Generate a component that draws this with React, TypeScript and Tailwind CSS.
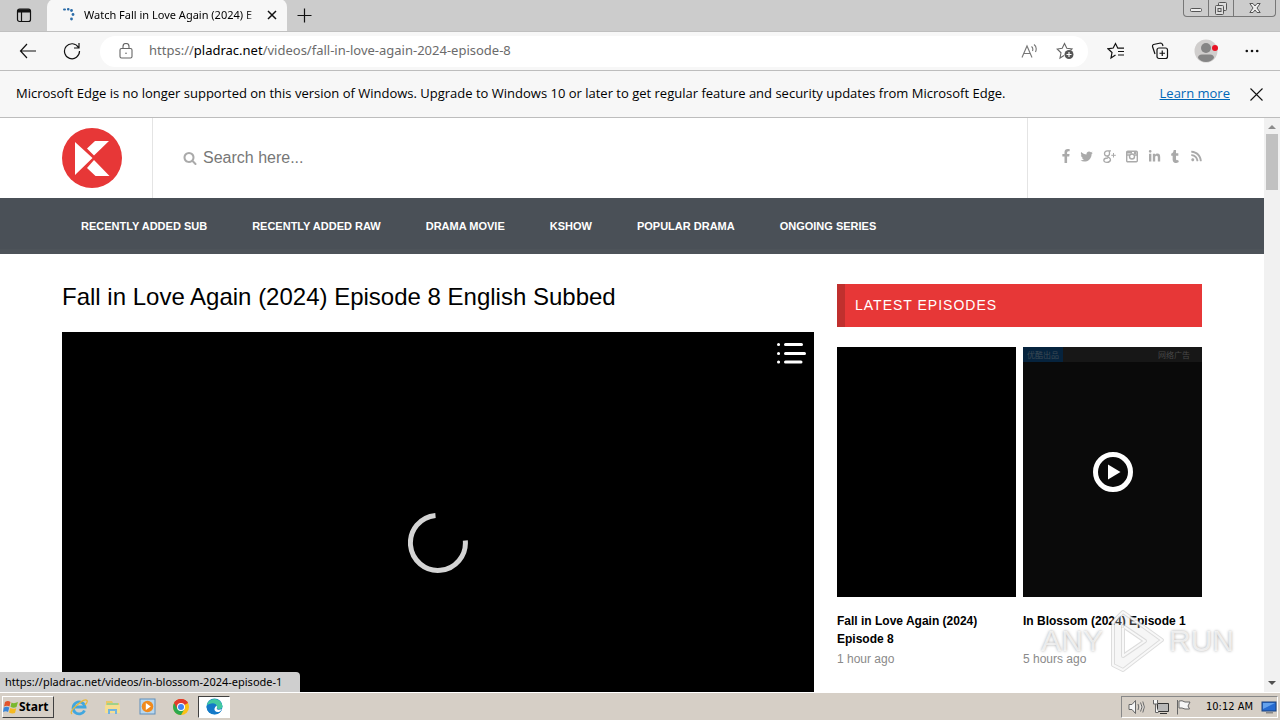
import type { ReactNode } from 'react';
import { FaLinkedinIn, FaRss, FaTumblr } from 'react-icons/fa';

const navItems = ['RECENTLY ADDED SUB', 'RECENTLY ADDED RAW', 'DRAMA MOVIE', 'KSHOW', 'POPULAR DRAMA', 'ONGOING SERIES'];

function IconButton({ label, className = '', children }: { label: string; className?: string; children: ReactNode }) {
  return (
    <button type="button" aria-label={label} className={`flex items-center justify-center shrink-0 ${className}`}>
      {children}
    </button>
  );
}

function TitleBar() {
  return (
    <div className="flex h-8 items-end bg-[#cccccc] border-b border-[#c0c0c0]">
      <IconButton label="Tab actions" className="h-8 w-[47px] rounded-br-lg">
        <svg width="16" height="16" viewBox="0 0 16 16" fill="none" stroke="#111">
          <rect x="1.5" y="2" width="13" height="12.5" rx="2" strokeWidth="1.2" />
          <path d="M2 3.2h12M2 4.6h12" strokeWidth="2" />
          <path d="M5.5 5v9.500" strokeWidth="1.2" />
        </svg>
      </IconButton>
      <div className="flex h-8 w-[240px] items-center rounded-t-lg bg-[#f7f7f7] pl-4">
        <svg width="14" height="14" viewBox="0 0 14 14" className="mr-[7px] shrink-0" fill="#2b6ca8">
          <rect x="0" y="0.500" width="3" height="2" rx="1" />
          <rect x="4" y="0" width="2.500" height="2.500" rx="1" />
          <circle cx="8.500" cy="2.500" r="1.400" />
          <circle cx="10" cy="6.500" r="1.400" />
          <circle cx="8.500" cy="11" r="1.400" />
        </svg>
        <span className="flex-1 overflow-hidden whitespace-nowrap bg-linear-to-r from-black from-92% to-[#ccc] bg-clip-text font-['Noto_Sans',sans-serif] text-[11px] text-transparent">
          Watch Fall in Love Again (2024) E
        </span>
        <IconButton label="Close tab" className="h-8 w-[30px]">
          <svg width="10" height="10" viewBox="0 0 10 10" stroke="#111" strokeWidth="1.500">
            <path d="M1 1l8 8M9 1l-8 8" />
          </svg>
        </IconButton>
      </div>
      <IconButton label="New tab" className="h-8 w-[34px]">
        <svg width="15" height="15" viewBox="0 0 15 15" stroke="#111" strokeWidth="1.200">
          <path d="M7.500 0.500v14M0.500 7.500h14" />
        </svg>
      </IconButton>
      <div className="mr-[4px] ml-auto flex h-[17px] self-start rounded-b border border-t-0 border-[#777]">
        <IconButton label="Minimize" className="w-[25px] border-r border-[#777]">
          <svg width="14" height="12" viewBox="0 0 14 12" fill="#eee" stroke="#555">
            <rect x="1.500" y="6.500" width="11" height="3" rx="1" />
          </svg>
        </IconButton>
        <IconButton label="Restore" className="w-[25px] border-r border-[#777]">
          <svg width="14" height="13" viewBox="0 0 14 13" fill="#ddd" stroke="#555">
            <rect x="4.500" y="0.500" width="8" height="8" rx="1" />
            <rect x="1.500" y="3.500" width="8" height="9" rx="1" />
            <rect x="4" y="6.500" width="3" height="3" />
          </svg>
        </IconButton>
        <IconButton label="Close" className="w-[41px]">
          <svg width="12" height="10" viewBox="0 0 12 10" fill="#eee" stroke="#555">
            <path d="M0.800 0.500h3.200l2 2.500 2-2.500h3.200L8 5l3.200 4.500H8L6 7 4 9.500H0.800L4 5z" />
          </svg>
        </IconButton>
      </div>
    </div>
  );
}

function Toolbar() {
  return (
    <div className="flex h-[39px] items-center border-b border-[#bdbdbd] bg-[#f7f7f7]">
      <IconButton label="Back" className="ml-[12px] w-8">
        <svg width="18" height="16" viewBox="0 0 18 16" fill="none" stroke="#111" strokeWidth="1.200">
          <path d="M17 8H1.500M8 1L1.500 8 8 15" />
        </svg>
      </IconButton>
      <IconButton label="Refresh" className="ml-[12px] w-8">
        <svg width="18" height="18" viewBox="0 0 18 18" fill="none" stroke="#111" strokeWidth="1.200">
          <path d="M15.500 5.500A7.500 7.500 0 1 0 16.500 9M16 1v5h-5" />
        </svg>
      </IconButton>
      <div className="ml-3 flex h-[31px] flex-1 items-center rounded-full bg-white pr-[5px] pl-[19px]">
        <svg width="14" height="16" viewBox="0 0 14 16" fill="none" stroke="#666" strokeWidth="1.100">
          <rect x="1" y="5.500" width="12" height="9.500" rx="1.500" />
          <path d="M4 5.500V3.500a3 3 0 0 1 6 0v2" />
          <circle cx="7" cy="10.200" r="0.800" fill="#666" stroke="none" />
        </svg>
        <span className="ml-4 flex-1 font-['Noto_Sans',sans-serif] text-[13px] text-[#6b6b6b]">
          https://<span className="text-black">pladrac.net</span>/videos/fall-in-love-again-2024-episode-8
        </span>
        <IconButton label="Read aloud" className="w-[36px]">
          <svg width="17" height="16" viewBox="0 0 17 16" fill="none" stroke="#777" strokeWidth="1.100">
            <path d="M1 14.500L6 3l5 11.500M2.800 10.500h6.400M10.500 3.500q2 1.500 1 4.500M13 1.500q3.500 2.500 1.500 7.500" />
          </svg>
        </IconButton>
        <IconButton label="Add to favorites" className="w-[36px]">
          <svg width="18" height="18" viewBox="0 0 18 18" fill="none" stroke="#666" strokeWidth="1.100">
            <path d="M8 13.500L4 16l1-5.200L1.200 7l5-.8L8.500 1.500l2.300 4.700 5.200.8-1.500 1.500" />
            <circle cx="13" cy="12.500" r="4.500" fill="#555" stroke="none" />
            <path d="M13 10v5M10.500 12.500h5" stroke="#fff" />
          </svg>
        </IconButton>
      </div>
      <IconButton label="Favorites" className="ml-[6px] w-11">
        <svg width="18" height="18" viewBox="0 0 18 18" fill="none" stroke="#111" strokeWidth="1.200">
          <path d="M8.500 13L4 16l1-5.500L1 6.800l5.200-.8L8.500 1.500l2.300 4.700h6.200M11 9.500h6M11 13h6" />
        </svg>
      </IconButton>
      <IconButton label="Collections" className="w-11">
        <svg width="18" height="18" viewBox="0 0 18 18" fill="none" stroke="#111" strokeWidth="1.200">
          <rect x="6" y="6" width="10.500" height="10.500" rx="2" />
          <path d="M11.250 8.500v5.500M8.500 11.250H14M4 12L1.500 4.500q-.3-1.500 1-2L9.500 1q1.500 0 2 1.500l.5 1.500" />
        </svg>
      </IconButton>
      <IconButton label="Profile" className="w-[48px]">
        <svg width="24" height="24" viewBox="0 0 24 24">
          <circle cx="12" cy="12" r="11.500" fill="#d0cecd" />
          <circle cx="12" cy="9" r="5" fill="#858585" />
          <path d="M4 19q0-3.500 4-3.500h8q4 0 4 3.500-3 4-8 4t-8-4z" fill="#858585" />
          <circle cx="21" cy="9" r="3" fill="#e81123" />
        </svg>
      </IconButton>
      <IconButton label="Settings and more" className="mr-[6px] w-11">
        <svg width="14" height="4" viewBox="0 0 14 4" fill="#111">
          <circle cx="1.800" cy="2" r="1.300" />
          <circle cx="7" cy="2" r="1.300" />
          <circle cx="12.200" cy="2" r="1.300" />
        </svg>
      </IconButton>
    </div>
  );
}

function InfoBar() {
  return (
    <div className="flex h-[47px] items-center border-b border-[#bdbdbd] bg-[#f7f7f7] pl-4 text-[13px]">
      <p className="flex-1 whitespace-nowrap text-black">
        Microsoft Edge is no longer supported on this version of Windows. Upgrade to Windows 10 or later to get regular feature and security updates from Microsoft Edge.
      </p>
      <a href="#learn" className="text-[#0067b8] underline">Learn more</a>
      <IconButton label="Dismiss" className="mr-[10px] ml-3 w-7">
        <svg width="13" height="13" viewBox="0 0 13 13" stroke="#111" strokeWidth="1.100">
          <path d="M0.500 0.500l12 12M12.500 0.500l-12 12" />
        </svg>
      </IconButton>
    </div>
  );
}

function SiteHeader() {
  return (
    <header>
      <div className="mx-auto flex h-20 max-w-[1140px]">
        <div className="flex w-[91px] items-center border-r border-[#e4e4e4]">
          <a href="#home" aria-label="Home">
            <svg width="60" height="60" viewBox="0 0 60 60">
              <circle cx="30" cy="30" r="30" fill="#e73737" />
              <path d="M13 14L30.500 30 13 47zM33 13h14L32 27.500l-7-7zM32 32l15.500 16H33.500L25 40z" fill="#fff" />
            </svg>
          </a>
        </div>
        <label className="flex flex-1 items-center pl-[30px]">
          <svg width="14" height="14" viewBox="0 0 1792 1792" fill="#aaa">
            <path d="M1216 832q0-185-131.500-316.500t-316.500-131.500-316.500 131.500-131.500 316.500 131.500 316.500 316.500 131.500 316.500-131.500 131.500-316.500zm512 832q0 52-38 90t-90 38q-54 0-90-38l-343-342q-179 124-399 124-143 0-273.500-55.500t-225-150-150-225-55.500-273.500 55.500-273.500 150-225 225-150 273.500-55.500 273.500 55.500 225 150 150 225 55.500 273.500q0 220-124 399l343 343q37 37 37 90z" />
          </svg>
          <input
            type="search"
            aria-label="Search"
            placeholder="Search here..."
            className="ml-[6px] flex-1 text-[16px] outline-none placeholder:text-[#777]"
          />
        </label>
        <div className="flex w-[175px] items-center justify-end gap-[10px] border-l border-[#e4e4e4] pb-1 text-[#aaa]">
          <a href="#facebook" aria-label="Facebook">
            <svg width="8" height="14" viewBox="479 0 864 1664" fill="currentColor">
              <path d="M1343 12v264h-157q-86 0-116 36t-30 108v189h293l-39 296h-254v759h-306v-759h-255v-296h255v-218q0-186 104-288.500t277-102.500q147 0 228 12z" />
            </svg>
          </a>
          <a href="#twitter" aria-label="Twitter">
            <svg width="13" height="13" viewBox="60 128 1640 1536" fill="currentColor">
              <path d="M1684 408q-67 98-162 167 1 14 1 42 0 130-38 259.500t-115.500 248.500-184.500 210.500-258 146-323 54.500q-271 0-496-145 35 4 78 4 225 0 401-138-105-2-188-64.500t-114-159.500q33 5 61 5 43 0 85-11-112-23-185.500-111.500t-73.500-205.500v-4q68 38 146 41-66-44-105-115t-39-154q0-88 44-163 121 149 294.500 238.500t371.500 99.500q-8-38-8-74 0-134 94.500-228.500t228.500-94.500q140 0 236 102 109-21 205-78-37 115-142 178 93-10 186-50z" />
            </svg>
          </a>
          <a href="#google" aria-label="Google Plus">
            <svg width="13" height="13" viewBox="0 0 13 13" fill="none" stroke="currentColor">
              <path d="M8 .800H4.500Q1.500 1 1.500 3.500T4 6q2.500 0 2.500-2.500T5.500 1" strokeWidth="1.300" />
              <path d="M4.500 6q0 1 1.500 1.700T7.500 10Q7 12.300 4 12.300T.800 10.200Q1 7.800 5 8" strokeWidth="1.300" />
              <path d="M10.500 3v4.500M8.300 5.300h4.500" />
            </svg>
          </a>
          <a href="#instagram" aria-label="Instagram">
            <svg width="12" height="13" viewBox="0 0 12 13" fill="none" stroke="currentColor" strokeWidth="1.400">
              <rect x=".700" y="1.200" width="10.600" height="10.600" rx="1" />
              <circle cx="6" cy="6.500" r="2.500" />
              <path d="M0.500 5h3M8.500 5h3" />
              <path d="M1 1.500h5v2H1zM8 2h2.500v2H8z" fill="currentColor" stroke="none" />
            </svg>
          </a>
          <a href="#linkedin" aria-label="LinkedIn"><FaLinkedinIn className="h-[13px] w-[13px]" /></a>
          <a href="#tumblr" aria-label="Tumblr"><FaTumblr className="h-[13px] w-[8px]" /></a>
          <a href="#rss" aria-label="RSS" className="pl-[2px]"><FaRss className="h-[12px] w-[11px]" /></a>
        </div>
      </div>
      <nav className="h-14 bg-[#4a5057] pb-[2px] shadow-[inset_0_-5px_0_#4d5359]">
        <ul className="mx-auto flex h-full max-w-[1140px] items-center gap-[45px] pl-[19px]">
          {navItems.map((item) => (
            <li key={item}>
              <a href="#list" className="text-[11px] font-bold text-white">{item}</a>
            </li>
          ))}
        </ul>
      </nav>
    </header>
  );
}

function Player() {
  return (
    <div className="relative flex h-[422px] items-center justify-center bg-black">
      <svg width="60" height="60" viewBox="0 0 60 60" fill="none" stroke="#d4d4d4" strokeWidth="5">
        <path d="M27.500 2.500A27.500 27.500 0 1 0 57.300 27.500" />
      </svg>
      <button type="button" aria-label="Episode list" className="absolute top-[9px] right-2">
        <svg width="30" height="24" viewBox="0 0 30 24" stroke="#fff" strokeWidth="3" strokeLinecap="round">
          <path d="M9.500 3.500h16M9.500 12.500h19M9.500 21h15.500M2.500 3.500h.1M2.500 12.500h.1M2.500 21h.1" />
        </svg>
      </button>
    </div>
  );
}

function Episode({ title, time, children }: { title: string; time: string; children?: ReactNode }) {
  return (
    <article className="flex-1">
      <a href="#episode" className="block">
        <div className="relative flex h-[250px] items-center justify-center overflow-hidden bg-black">{children}</div>
        <h3 className="mt-[15px] min-h-9 text-[12px] leading-[18px] font-bold text-black">{title}</h3>
      </a>
      <p className="mt-[2px] text-[12px] leading-[18px] text-[#8a8a8a]">{time}</p>
    </article>
  );
}

function Sidebar() {
  return (
    <aside className="w-[365px] shrink-0">
      <h2 className="flex h-[43px] items-center border-l-8 border-[#c0302e] bg-[#e73737] pl-[10px] text-[14px] tracking-[1px] text-white">
        LATEST EPISODES
      </h2>
      <div className="mt-5 flex gap-[7px]">
        <Episode title="Fall in Love Again (2024) Episode 8" time="1 hour ago" />
        <Episode title="In Blossom (2024) Episode 1" time="5 hours ago">
          <div className="absolute inset-0 bg-[#0a0a0a]">
            <div className="flex h-[15px] items-center justify-between bg-[#171717] pr-3 font-['Noto_Sans_CJK_SC',sans-serif] text-[8px] text-[#3c4a55]">
              <span className="bg-[#06233d] px-1 leading-[15px]">优酷出品</span>
              <span className="text-[#484848]">网络广告</span>
            </div>
          </div>
          <svg width="40" height="40" viewBox="0 0 40 40" className="relative">
            <circle cx="20" cy="20" r="17.500" fill="none" stroke="#fff" strokeWidth="5" />
            <path d="M15 12.500v15L27.500 20z" fill="#fff" />
          </svg>
        </Episode>
      </div>
    </aside>
  );
}

function ScrollBar() {
  return (
    <div className="flex w-4 shrink-0 flex-col items-center bg-[#f1f1f1]" aria-hidden="true">
      <svg width="16" height="16" viewBox="0 0 16 16" fill="#8c8c8c">
        <path d="M4 11l4-4 4 4z" />
      </svg>
      <div className="h-14 w-3 bg-[#c1c1c1]" />
      <svg width="16" height="16" viewBox="0 0 16 16" fill="#505050" className="mt-auto">
        <path d="M4 5l4 4 4-4z" />
      </svg>
    </div>
  );
}

function Watermark() {
  return (
    <div className="pointer-events-none absolute right-[46px] bottom-[18px] flex items-center gap-1 font-['Liberation_Sans',sans-serif] text-[30px] leading-none text-white/70 [text-shadow:0_0_3px_rgba(0,0,0,0.35)]">
      <span>ANY</span>
      <svg width="58" height="66" viewBox="0 0 58 66" fill="none" strokeLinejoin="round">
        <path d="M16 4L55 32 16 62 6 57V14l10-10zM16 18v30l22-15z" stroke="#bbb" strokeOpacity="0.5" strokeWidth="4" />
        <path d="M16 4L55 32 16 62 6 57V14l10-10zM16 18v30l22-15z" stroke="#fff" strokeOpacity="0.8" strokeWidth="2" fill="#ddd" fillOpacity="0.25" fillRule="evenodd" />
      </svg>
      <span>RUN</span>
    </div>
  );
}

function Taskbar() {
  return (
    <footer className="flex h-7 shrink-0 items-center border-t border-white bg-[#d6cfc6] px-[2px] font-['DejaVu_Sans_Condensed','DejaVu_Sans',sans-serif] text-[11px] text-black">
      <button type="button" className="flex h-[22px] w-[52px] items-center border border-t-white border-r-[#404040] border-b-[#404040] border-l-white text-[12px] font-bold">
        <svg width="16" height="16" viewBox="0 0 16 16" className="shrink-0">
          <path d="M2 3q3-2 5.500 0L6.500 7.500Q4 6 1 7.500z" fill="#e2542b" />
          <path d="M8.500 3.500Q11 5 15 3l-1.500 5q-3 1.500-6-.2z" fill="#79b82f" />
          <path d="M.800 8.500q3-1.500 5.500 0L5 13Q3 11.500 0 13z" fill="#3a86d8" />
          <path d="M7.200 9q3 1.500 6 .2L12 14q-3 1-6-.5z" fill="#f5b921" />
        </svg>
        <span className="font-['Noto_Sans',sans-serif]">Start</span>
      </button>
      <div className="ml-2 flex items-center">
        <IconButton label="Internet Explorer" className="h-[22px] w-[34px]">
          <svg width="18" height="18" viewBox="0 0 18 18" fill="none">
            <path d="M14.500 12.500A6 6 0 1 1 15 9H4" stroke="#41a7df" strokeWidth="2.800" />
            <path d="M2 16Q-1 14 7 7T17 2.500Q18 4 15 7" stroke="#e9b93a" strokeWidth="1.300" />
          </svg>
        </IconButton>
        <IconButton label="Windows Explorer" className="h-[22px] w-[34px]">
          <svg width="18" height="18" viewBox="0 0 18 18">
            <path d="M2 3h6l1 2h6v10H2z" fill="#e9c866" />
            <path d="M3 5h11v4H3z" fill="#9fd18b" />
            <path d="M1 7h15v8H1z" fill="#f5de92" />
            <path d="M4 16v-5h9v5h-2v-3H6v3z" fill="#72b4df" />
          </svg>
        </IconButton>
        <IconButton label="Media Player" className="h-[22px] w-[34px]">
          <svg width="17" height="17" viewBox="0 0 17 17">
            <rect x="1" y="1" width="15" height="15" fill="#b9d7ee" stroke="#5f8fbb" />
            <circle cx="8.500" cy="8.500" r="5.800" fill="#f08a1d" />
            <path d="M6.800 5v7l5-3.500z" fill="#fff" />
          </svg>
        </IconButton>
        <IconButton label="Chrome" className="h-[22px] w-[34px]">
          <svg width="16" height="16" viewBox="0 0 16 16">
            <circle cx="8" cy="8" r="8" fill="#fbc116" />
            <path d="M8 8L1.100 4A8 8 0 0 1 14.900 4z" fill="#e33b2e" />
            <path d="M8 8L1.100 4A8 8 0 0 0 8 16l3.500-6z" fill="#2da94f" />
            <path d="M8 4h6.900A8 8 0 0 0 1.100 4L4.500 10z" fill="#e33b2e" />
            <circle cx="8" cy="8" r="4" fill="#fff" />
            <circle cx="8" cy="8" r="3" fill="#4285f4" />
          </svg>
        </IconButton>
        <IconButton label="Microsoft Edge" className="h-[22px] w-8 border border-t-[#404040] border-r-white border-b-white border-l-[#404040] bg-white">
          <svg width="17" height="17" viewBox="0 0 17 17">
            <circle cx="8.500" cy="8.500" r="8" fill="#1786c9" />
            <path d="M.800 7A8 8 0 0 1 16.500 8q0 3-3.500 3-2.500 0-2-1.500Q10.500 5.500 7 5.500 3 5.500.800 7z" fill="#43c9a0" />
            <path d="M.500 9Q2 5.500 6.500 5.500T11 9q-.500 1 .500 2 2 1.500 4.500 0-2 5.300-7.500 5.300A8 8 0 0 1 .500 9z" fill="#1479c8" />
            <path d="M10.500 7.500q1 1.500.300 2.500-.500 1.300 1.200 1.700 2 .300 4-.700-1 2.200-3 3-3 .500-4.200-1.500T10.500 7.500z" fill="#fff" />
          </svg>
        </IconButton>
      </div>
      <div className="ml-auto flex h-[22px] items-center border border-t-[#888] border-r-white border-b-white border-l-[#888] pl-[6px]">
        <svg width="66" height="16" viewBox="0 0 66 16" fill="#f6f6f6" stroke="#666">
          <path d="M1 5.500h3l3.500-4v13L4 10.500H1zM10 5q1.500 3 0 6M12.500 3.500q3 4.500 0 9M14.800 2.500q3 5.500 0 11" />
          <path d="M29.500 4.500h11v8h-11zM32 14.500h7" fill="#b8b8b8" stroke="#333" />
          <path d="M25.500 1v4h4V1M27.500 5v8.500h3" />
          <path d="M49.500 1v14.500M51 2q3-1 6 1h5l-2 4 1.500 3H57q-3-1.500-6-1z" />
        </svg>
        <span className="ml-[12px] pt-px">10:12 AM</span>
        <svg width="16" height="16" viewBox="0 0 16 16" className="ml-2">
          <rect x="1" y="3" width="14" height="9" fill="#276bd0" stroke="#1b437f" />
          <path d="M2 4h12L2 10z" fill="#65a2ec" />
          <path d="M5 13h7v1.500H5z" fill="#888" />
        </svg>
      </div>
    </footer>
  );
}

export default function App() {
  return (
    <div className="flex h-screen flex-col overflow-hidden bg-white font-['Open_Sans','Noto_Sans',sans-serif]">
      <TitleBar />
      <Toolbar />
      <InfoBar />
      <div className="relative flex min-h-0 flex-1">
        <div className="min-w-0 flex-1 overflow-hidden font-['Liberation_Sans',Arial,sans-serif]">
          <SiteHeader />
          <main className="mx-auto flex max-w-[1140px] gap-[23px] pt-[30px]">
            <section className="min-w-0 flex-1">
              <h1 className="mb-[22px] text-[24px] leading-[26px] text-black">Fall in Love Again (2024) Episode 8 English Subbed</h1>
              <Player />
            </section>
            <Sidebar />
          </main>
        </div>
        <ScrollBar />
        <Watermark />
        <div className="absolute bottom-0 left-0 flex h-5 w-[300px] items-center rounded-tr bg-[#cfcfcf] pl-[5px] font-['Noto_Sans',sans-serif] text-[11px] text-black">
          https://pladrac.net/videos/in-blossom-2024-episode-1
        </div>
      </div>
      <Taskbar />
    </div>
  );
}
